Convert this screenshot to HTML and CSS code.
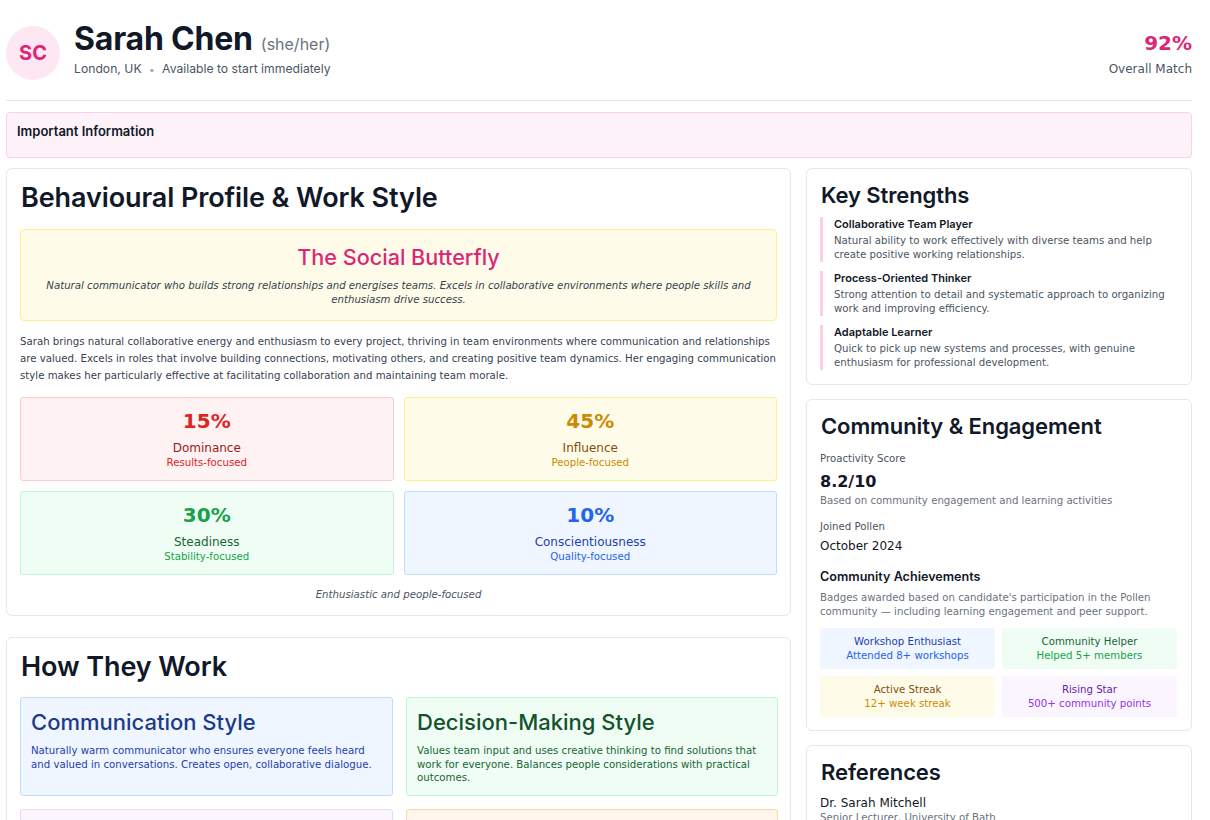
FILE: index.html
```html
<!DOCTYPE html>
<html lang="en">
<head>
<meta charset="utf-8">
<title>Sarah Chen – Candidate Profile</title>
<link rel="stylesheet" href="styles.css">
</head>
<body>
<div class="page">
  <header class="header">
    <div class="who">
      <div class="avatar">SC</div>
      <div class="who-text">
        <div class="name-row"><h1 class="name">Sarah Chen</h1><span class="pronouns">(she/her)</span></div>
        <div class="meta">London, UK <span class="dot">•</span> Available to start immediately</div>
      </div>
    </div>
    <div class="match">
      <div class="match-val">92%</div>
      <div class="match-label">Overall Match</div>
    </div>
  </header>

  <div class="notice">Important Information</div>

  <div class="layout">
    <div class="col-main">
      <section class="card">
        <h2 class="card-title big">Behavioural Profile &amp; Work Style</h2>
        <div class="persona">
          <div class="persona-name">The Social Butterfly</div>
          <p class="persona-desc">Natural communicator who builds strong relationships and energises teams. Excels in collaborative environments where people skills and enthusiasm drive success.</p>
        </div>
        <p class="summary">Sarah brings natural collaborative energy and enthusiasm to every project, thriving in team environments where communication and relationships are valued. Excels in roles that involve building connections, motivating others, and creating positive team dynamics. Her engaging communication style makes her particularly effective at facilitating collaboration and maintaining team morale.</p>
        <div class="disc">
          <div class="disc-box red">
            <div class="disc-pct">15%</div>
            <div class="disc-name">Dominance</div>
            <div class="disc-sub">Results-focused</div>
          </div>
          <div class="disc-box yellow">
            <div class="disc-pct">45%</div>
            <div class="disc-name">Influence</div>
            <div class="disc-sub">People-focused</div>
          </div>
          <div class="disc-box green">
            <div class="disc-pct">30%</div>
            <div class="disc-name">Steadiness</div>
            <div class="disc-sub">Stability-focused</div>
          </div>
          <div class="disc-box blue">
            <div class="disc-pct">10%</div>
            <div class="disc-name">Conscientiousness</div>
            <div class="disc-sub">Quality-focused</div>
          </div>
        </div>
        <p class="disc-note">Enthusiastic and people-focused</p>
      </section>

      <section class="card">
        <h2 class="card-title big">How They Work</h2>
        <div class="styles-grid">
          <div class="style-box s-blue">
            <h3 class="style-title">Communication Style</h3>
            <p class="style-text">Naturally warm communicator who ensures everyone feels heard and valued in conversations. Creates open, collaborative dialogue.</p>
          </div>
          <div class="style-box s-green">
            <h3 class="style-title">Decision-Making Style</h3>
            <p class="style-text">Values team input and uses creative thinking to find solutions that work for everyone. Balances people considerations with practical outcomes.</p>
          </div>
          <div class="style-box s-purple">
            <h3 class="style-title">Work Environment</h3>
            <p class="style-text">Thrives in collaborative, social settings with plenty of interaction.</p>
          </div>
          <div class="style-box s-orange">
            <h3 class="style-title">Motivation</h3>
            <p class="style-text">Energised by recognition, connection and shared goals.</p>
          </div>
        </div>
      </section>
    </div>

    <aside class="col-side">
      <section class="card">
        <h2 class="card-title">Key Strengths</h2>
        <div class="strengths">
          <div class="strength">
            <div class="strength-title">Collaborative Team Player</div>
            <div class="strength-text">Natural ability to work effectively with diverse teams and help create positive working relationships.</div>
          </div>
          <div class="strength">
            <div class="strength-title">Process-Oriented Thinker</div>
            <div class="strength-text">Strong attention to detail and systematic approach to organizing work and improving efficiency.</div>
          </div>
          <div class="strength">
            <div class="strength-title">Adaptable Learner</div>
            <div class="strength-text">Quick to pick up new systems and processes, with genuine enthusiasm for professional development.</div>
          </div>
        </div>
      </section>

      <section class="card community">
        <h2 class="card-title">Community &amp; Engagement</h2>
        <div class="stat-label">Proactivity Score</div>
        <div class="stat-big">8.2/10</div>
        <div class="stat-note">Based on community engagement and learning activities</div>
        <div class="stat-label gap">Joined Pollen</div>
        <div class="stat-mid">October 2024</div>
        <h3 class="sub-title">Community Achievements</h3>
        <p class="stat-desc">Badges awarded based on candidate's participation in the Pollen community — including learning engagement and peer support.</p>
        <div class="badges">
          <div class="badge b-blue"><div class="badge-name">Workshop Enthusiast</div><div class="badge-sub">Attended 8+ workshops</div></div>
          <div class="badge b-green"><div class="badge-name">Community Helper</div><div class="badge-sub">Helped 5+ members</div></div>
          <div class="badge b-yellow"><div class="badge-name">Active Streak</div><div class="badge-sub">12+ week streak</div></div>
          <div class="badge b-purple"><div class="badge-name">Rising Star</div><div class="badge-sub">500+ community points</div></div>
        </div>
      </section>

      <section class="card">
        <h2 class="card-title">References</h2>
        <div class="ref-name">Dr. Sarah Mitchell</div>
        <div class="ref-role">Senior Lecturer, University of Bath</div>
      </section>
    </aside>
  </div>
</div>
</body>
</html>
```

FILE: styles.css
```css
* { box-sizing: border-box; }
html, body { margin: 0; padding: 0; background: #fff; }
body {
  font-family: "DejaVu Sans", sans-serif;
  color: #111827;
  overflow: hidden;
}
p { margin: 0; }
h1, h2, h3 { margin: 0; }

.page {
  width: 1186px;
  margin-left: 6px;
}

.header {
  display: flex;
  justify-content: space-between;
  align-items: flex-start;
  padding: 17px 0 20px;
  border-bottom: 1px solid #e5e7eb;
}
.who { display: flex; align-items: center; gap: 14px; }
.avatar {
  width: 54px; height: 54px;
  border-radius: 50%;
  background: #fce7f3;
  color: #db2777;
  font-family: Inter, sans-serif;
  font-weight: 700;
  font-size: 20px;
  display: flex; align-items: center; justify-content: center;
  margin-top: 9px;
}
.name-row { display: flex; align-items: baseline; gap: 8px; }
.name {
  font-family: Inter, sans-serif;
  font-weight: 700;
  font-size: 32px;
  line-height: 40px;
  color: #111827;
  letter-spacing: -0.2px;
  margin-top: -2px;
}
.pronouns { font-family: Inter, sans-serif; font-size: 16px; color: #6b7280; }
.meta {
  font-family: Inter, sans-serif;
  font-size: 12.2px;
  color: #4b5563;
  margin-top: 2px;
}
.dot { color: #9ca3af; margin: 0 4px; font-size: 10px; }
.match { text-align: right; padding-top: 13px; }
.match-val { font-weight: 700; font-size: 20px; line-height: 26px; color: #db2777; }
.match-label { font-size: 12px; color: #4b5563; margin-top: 6px; }

.notice {
  margin-top: 11px;
  height: 46px;
  background: #fdf2f8;
  border: 1px solid #fbcfe8;
  border-radius: 4px;
  padding: 10px 10px;
  font-family: Inter, sans-serif;
  font-weight: 600;
  font-size: 13px;
  color: #111827;
}

.layout {
  display: grid;
  grid-template-columns: 785px 386px;
  gap: 15px;
  margin-top: 10px;
  align-items: start;
}
.col-main, .col-side { display: flex; flex-direction: column; }
.col-main { gap: 21px; }
.col-side { gap: 14px; }

.card {
  border: 1px solid #e5e7eb;
  border-radius: 6px;
  background: #fff;
  padding: 11px 13px 14px;
}
.card.community { padding-bottom: 13px; }
.card-title {
  font-family: Inter, sans-serif;
  font-weight: 600;
  font-size: 22px;
  line-height: 30px;
  color: #111827;
  letter-spacing: -0.1px;
  padding-left: 1px;
}
.card-title.big { font-size: 27px; line-height: 34px; }
.col-main .card { padding-top: 12px; padding-bottom: 15px; }

.persona {
  margin-top: 14px;
  background: #fefce8;
  border: 1px solid #fef08a;
  border-radius: 4px;
  padding: 13px 20px 13px;
  text-align: center;
}
.persona-name {
  font-family: Inter, sans-serif;
  font-size: 21.6px;
  font-weight: 500;
  color: #db2777;
  line-height: 28px;
}
.persona-desc {
  margin-top: 8px;
  font-style: italic;
  font-size: 10.2px;
  line-height: 14px;
  color: #374151;
}
.summary {
  margin-top: 12px;
  font-size: 10.2px;
  line-height: 17px;
  color: #374151;
}
.disc {
  margin-top: 13px;
  display: grid;
  grid-template-columns: 1fr 1fr;
  gap: 10px;
}
.disc-box {
  height: 84px;
  border: 1px solid;
  border-radius: 3px;
  text-align: center;
  padding-top: 11px;
}
.disc-pct { font-weight: 700; font-size: 20px; line-height: 24px; }
.disc-name { font-size: 12px; line-height: 16px; margin-top: 7px; }
.disc-sub { font-size: 10.2px; line-height: 14px; }
.red { background: #fef2f2; border-color: #fecaca; }
.red .disc-pct { color: #dc2626; }
.red .disc-name { color: #991b1b; }
.red .disc-sub { color: #dc2626; }
.yellow { background: #fefce8; border-color: #fef08a; }
.yellow .disc-pct { color: #ca8a04; }
.yellow .disc-name { color: #854d0e; }
.yellow .disc-sub { color: #ca8a04; }
.green { background: #f0fdf4; border-color: #bbf7d0; }
.green .disc-pct { color: #16a34a; }
.green .disc-name { color: #166534; }
.green .disc-sub { color: #16a34a; }
.blue { background: #eff6ff; border-color: #bfdbfe; }
.blue .disc-pct { color: #2563eb; }
.blue .disc-name { color: #1e40af; }
.blue .disc-sub { color: #2563eb; }
.disc-note {
  margin-top: 14px;
  text-align: center;
  font-style: italic;
  font-size: 10.2px;
  color: #4b5563;
}

.styles-grid {
  margin-top: 13px;
  display: grid;
  grid-template-columns: 373px 372px;
  column-gap: 13px;
  row-gap: 13px;
}
.style-box {
  border: 1px solid;
  border-radius: 3px;
  padding: 10px 10px 10px;
  height: 99px;
}
.style-title {
  font-family: Inter, sans-serif;
  font-weight: 500;
  font-size: 22px;
  line-height: 28px;
}
.style-text { margin-top: 8px; font-size: 10.2px; line-height: 13.6px; }
.s-blue { background: #eff6ff; border-color: #bfdbfe; }
.s-blue .style-title { color: #1e3a8a; }
.s-blue .style-text { color: #1e40af; }
.s-green { background: #f0fdf4; border-color: #bbf7d0; }
.s-green .style-title { color: #14532d; }
.s-green .style-text { color: #166534; }
.s-purple { background: #faf5ff; border-color: #e9d5ff; }
.s-purple .style-title { color: #581c87; }
.s-purple .style-text { color: #6b21a8; }
.s-orange { background: #fff7ed; border-color: #fed7aa; }
.s-orange .style-title { color: #7c2d12; }
.s-orange .style-text { color: #9a3412; }

.strengths { margin-top: 7px; display: flex; flex-direction: column; gap: 9px; }
.strength {
  border-left: 3px solid #fbcfe8;
  padding-left: 11px;
}
.strength-title {
  font-family: Inter, sans-serif;
  font-weight: 600;
  font-size: 11px;
  line-height: 14px;
  color: #111827;
}
.strength-text { margin-top: 3px; font-size: 10.2px; line-height: 14px; color: #4b5563; }

.stat-label { margin-top: 11px; font-size: 10.2px; color: #4b5563; line-height: 14px; }
.stat-label.gap { margin-top: 12px; }
.stat-big { font-weight: 700; font-size: 16px; line-height: 20px; margin-top: 6px; color: #111827; }
.stat-note { font-size: 10.2px; color: #6b7280; line-height: 14px; margin-top: 2px; }
.stat-mid { font-size: 12px; line-height: 18px; margin-top: 3px; color: #111827; }
.sub-title {
  margin-top: 14px;
  font-family: Inter, sans-serif;
  font-weight: 600;
  font-size: 12.6px;
  line-height: 16px;
  color: #111827;
}
.stat-desc { margin-top: 6px; font-size: 10.2px; line-height: 14px; color: #6b7280; }
.badges {
  margin-top: 9px;
  display: grid;
  grid-template-columns: 175px 175px;
  column-gap: 7px;
  row-gap: 7px;
}
.badge {
  height: 41px;
  border-radius: 3px;
  text-align: center;
  font-size: 10.2px;
  line-height: 14px;
  padding-top: 7px;
}
.b-blue { background: #eff6ff; }
.b-blue .badge-name { color: #1e40af; }
.b-blue .badge-sub { color: #2563eb; }
.b-green { background: #f0fdf4; }
.b-green .badge-name { color: #166534; }
.b-green .badge-sub { color: #16a34a; }
.b-yellow { background: #fefce8; }
.b-yellow .badge-name { color: #854d0e; }
.b-yellow .badge-sub { color: #ca8a04; }
.b-purple { background: #faf5ff; }
.b-purple .badge-name { color: #6b21a8; }
.b-purple .badge-sub { color: #9333ea; }

.ref-name { margin-top: 9px; font-size: 12px; line-height: 15px; color: #111827; }
.ref-role { font-size: 10.2px; line-height: 14px; color: #6b7280; }
```
